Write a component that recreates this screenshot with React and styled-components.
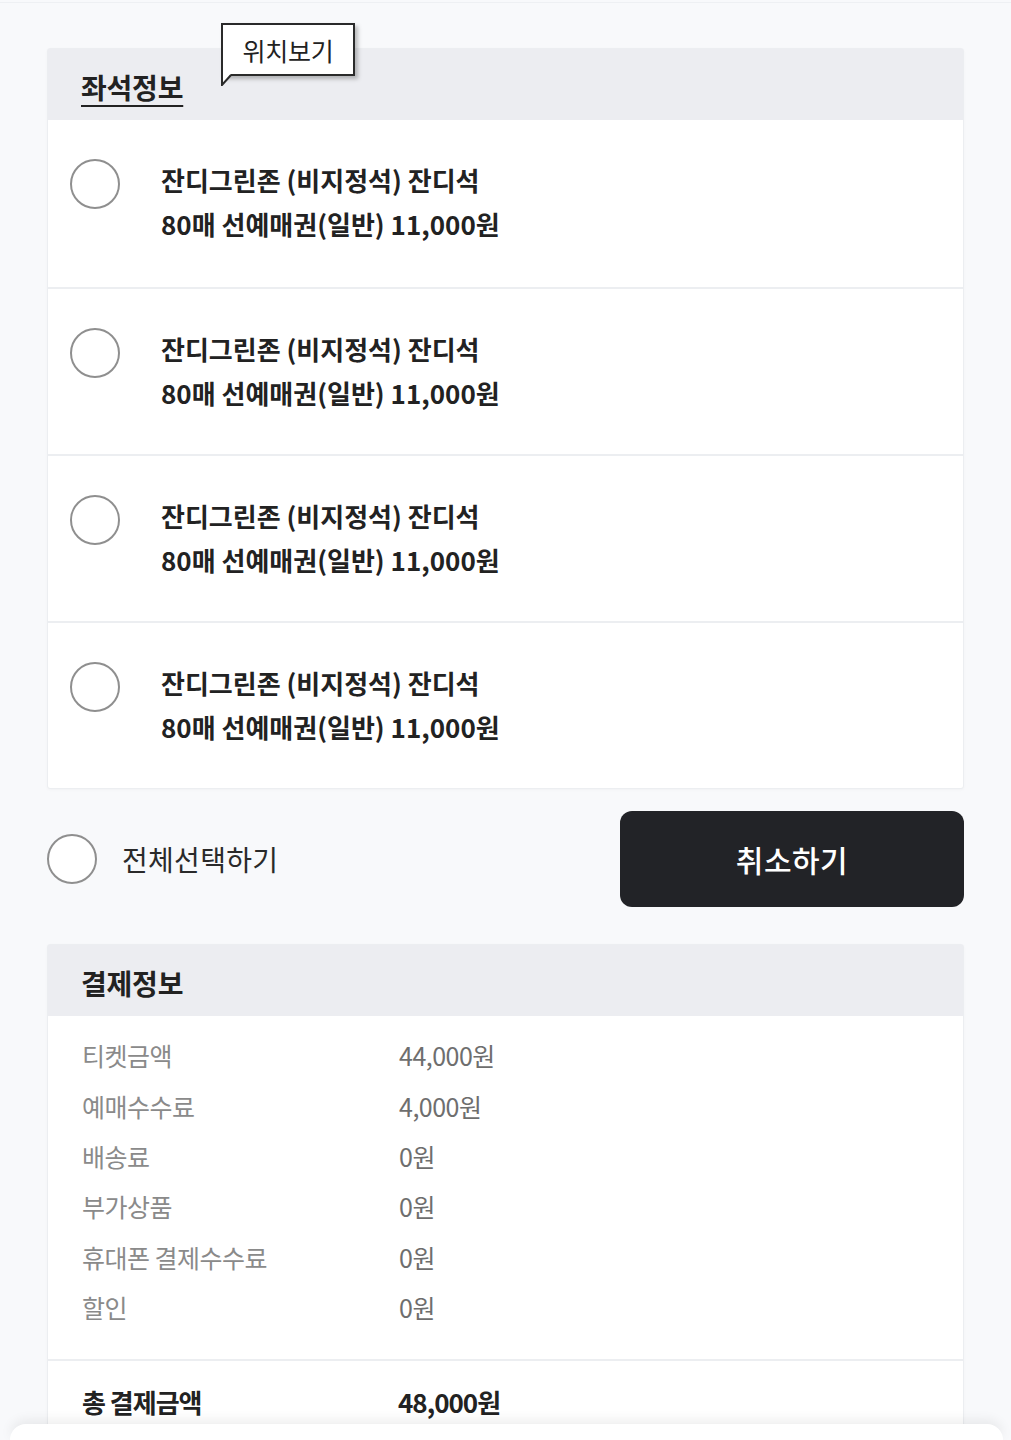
import React from "react";
import styled, { createGlobalStyle } from "styled-components";

const GlobalStyle = createGlobalStyle`
  html, body {
    margin: 0;
    padding: 0;
    background: #f8f9fb;
    font-family: "Noto Sans CJK KR", "Noto Sans", sans-serif;
    color: #222;
  }
`;

const Page = styled.main`
  margin-top: 2px;
  border-top: 1px solid #eef0f3;
  padding: 45px 47px 40px;
  display: flex;
  flex-direction: column;
`;

const Card = styled.section`
  background: #fff;
  border: 1px solid #eceef1;
  border-radius: 3px;
  box-shadow: 0 1px 3px rgba(0, 0, 0, 0.03);
`;

const CardHeader = styled.header`
  position: relative;
  height: 71px;
  background: #ecedf1;
  display: flex;
  align-items: center;
  padding: 4px 33px 0;
  box-sizing: border-box;
`;

const Title = styled.h2`
  margin: 0;
  font-size: 28px;
  font-weight: 700;
  letter-spacing: -0.2px;
  color: #222;
  text-decoration: ${(p) => (p.$underline ? "underline" : "none")};
  text-decoration-thickness: 2px;
  text-underline-offset: 6px;
`;

const Tooltip = styled.div`
  position: absolute;
  left: 173px;
  top: -26px;
  width: 134px;
  height: 53px;
  box-sizing: border-box;
  background: #fff;
  border: 2px solid #2a2a2a;
  box-shadow: 3px 3px 4px rgba(0, 0, 0, 0.25);
  display: flex;
  align-items: center;
  justify-content: center;
  font-size: 25px;
  letter-spacing: -0.2px;
  color: #222;
`;

const TooltipTail = styled.svg`
  position: absolute;
  left: -2px;
  bottom: -12px;
`;

const SeatRow = styled.div`
  display: flex;
  align-items: flex-start;
  gap: 41px;
  height: 167px;
  box-sizing: border-box;
  padding: 39px 22px 0;
  border-top: ${(p) => (p.$first ? "none" : "2px solid #eceef1")};
`;

const Radio = styled.span`
  flex: none;
  width: 50px;
  height: 50px;
  box-sizing: border-box;
  border: 2px solid #8f8f8f;
  border-radius: 50%;
  background: #fff;
`;

const SeatText = styled.div`
  font-size: 26px;
  font-weight: 700;
  letter-spacing: 0;
  line-height: 44px;
  color: #222;
  margin-top: -1px;
`;

const ActionBar = styled.div`
  display: flex;
  align-items: center;
  justify-content: space-between;
  margin: 22px 0 37px;
`;

const SelectAll = styled.label`
  display: flex;
  align-items: center;
  gap: 25px;
  font-size: 28px;
  letter-spacing: 0.3px;
  color: #2a2a2a;
`;

const CancelButton = styled.button`
  width: 344px;
  height: 96px;
  border: none;
  border-radius: 12px;
  background: #222327;
  color: #fff;
  font-family: inherit;
  font-size: 30px;
  font-weight: 500;
  letter-spacing: 0.5px;
`;

const PayList = styled.dl`
  margin: 0;
  padding: 14px 34px 27px;
  display: grid;
  grid-template-columns: 317px 1fr;
  grid-auto-rows: 50.4px;
  align-items: center;
`;

const PayLabel = styled.dt`
  font-size: 25px;
  letter-spacing: -0.5px;
  color: #8a8a8a;
`;

const PayValue = styled.dd`
  margin: 0;
  font-size: 25px;
  letter-spacing: -0.5px;
  color: #6e6e6e;
`;

const TotalRow = styled.div`
  display: grid;
  grid-template-columns: 316px 1fr;
  align-items: center;
  border-top: 2px solid #eceef1;
  padding: 22px 34px 40px;
  font-size: 26px;
  font-weight: 700;
  letter-spacing: -1px;
  color: #222;
`;

const BottomSheet = styled.div`
  position: fixed;
  left: 10px;
  right: 8px;
  bottom: 0;
  height: 16px;
  background: #fff;
  border-radius: 22px 22px 0 0;
  box-shadow: 0 -4px 12px rgba(0, 0, 0, 0.07);
`;

const seats = [1, 2, 3, 4];

const payments = [
  ["티켓금액", "44,000원"],
  ["예매수수료", "4,000원"],
  ["배송료", "0원"],
  ["부가상품", "0원"],
  ["휴대폰 결제수수료", "0원"],
  ["할인", "0원"],
];

const App = () => {
  return (
    <>
      <GlobalStyle />
      <Page>
        <Card>
          <CardHeader>
            <Title $underline>좌석정보</Title>
            <Tooltip>
              위치보기
              <TooltipTail width="12" height="12" viewBox="0 0 12 12">
                <path d="M1 0 L1 11 L10 0 Z" fill="#fff" />
                <path d="M1 0 L1 11 L10 1" fill="none" stroke="#2a2a2a" strokeWidth="2" />
              </TooltipTail>
            </Tooltip>
          </CardHeader>
          {seats.map((s, i) => (
            <SeatRow key={s} $first={i === 0}>
              <Radio />
              <SeatText>
                잔디그린존 (비지정석) 잔디석
                <br />
                80매 선예매권(일반) 11,000원
              </SeatText>
            </SeatRow>
          ))}
        </Card>

        <ActionBar>
          <SelectAll>
            <Radio />
            전체선택하기
          </SelectAll>
          <CancelButton>취소하기</CancelButton>
        </ActionBar>

        <Card>
          <CardHeader>
            <Title>결제정보</Title>
          </CardHeader>
          <PayList>
            {payments.map(([label, value]) => (
              <React.Fragment key={label}>
                <PayLabel>{label}</PayLabel>
                <PayValue>{value}</PayValue>
              </React.Fragment>
            ))}
          </PayList>
          <TotalRow>
            <span>총 결제금액</span>
            <span>48,000원</span>
          </TotalRow>
        </Card>
      </Page>
      <BottomSheet />
    </>
  );
};

export default App;
